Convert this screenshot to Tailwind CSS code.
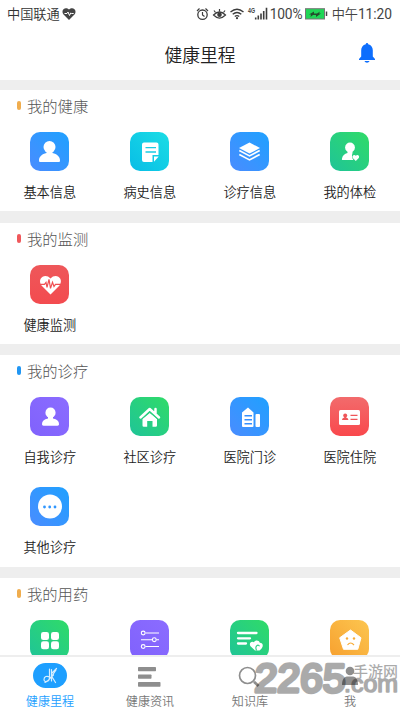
<!DOCTYPE html>
<html lang="zh-CN">
<head>
<meta charset="utf-8">
<title>健康里程</title>
<script src="https://cdn.jsdelivr.net/npm/@tailwindcss/browser@4"></script>
</head>
<body class="bg-white">
<div class="relative flex h-[711px] w-[400px] flex-col overflow-hidden bg-white font-['Noto_Sans_CJK_SC',sans-serif] text-[#222]">

  <!-- status bar -->
  <div class="flex h-7 shrink-0 items-center pl-[7px] text-[13.2px] leading-7 text-[#444]">
    <span class="font-[350] text-[#333]">中国联通</span>
    <svg class="ml-[2px] h-3 w-[14px]" viewBox="0 0 14 12"><path d="M7 12 1.3 6.2C-1.5 2 3.5-2 7 1.6 10.5-2 15.500 2 12.700 6.200Z" fill="#444"/><path d="M2.500 5.500h2.500l1-1.500 1.500 3.500 1.200-2.500 1 .5h2" fill="none" stroke="#fff" stroke-width="1"/></svg>
    <svg class="ml-[120px] h-[14px] w-[74px] shrink-0" viewBox="196 6.500 74 14" fill="none" stroke="#3c3c3c">
      <circle cx="202.500" cy="14.200" r="4.700" stroke-width="1.300"/><path d="M202.500 11.500v3l2 1.500M197 10.500l2.500-2.500M208 10.500l-2.500-2.500" stroke-width="1.200"/>
      <path d="M213.500 14.500q6-6 12 0q-6 6-12 0z" stroke-width="1.200"/><circle cx="219.500" cy="14.300" r="2.300" fill="#3c3c3c" stroke="none"/><path d="M219.500 11V8.500M215.500 12l-1.500-2M223.500 12l1.500-2" stroke-width="1.200"/>
      <path d="M230.500 11.500q6.500-5.500 13 0M232.700 13.800q4.300-3.500 8.600 0M234.800 16q2.200-1.800 4.400 0" stroke-width="1.400"/><circle cx="237" cy="17.700" r="1.100" fill="#3c3c3c" stroke="none"/>
      <path d="M255.700 19v-2M258.300 19v-4M261 19v-6M263.700 19v-8.500M266.500 19V7.300" stroke-width="1.600"/>
      <text x="248" y="12.500" font-size="6.500" font-family="Liberation Sans" font-weight="bold" textLength="7" lengthAdjust="spacingAndGlyphs" fill="#3c3c3c" stroke="none">4G</text>
    </svg>
    <span class="w-[32px] whitespace-nowrap font-['Roboto'] text-[13.800px] tracking-[-0.2px]">100%</span>
    <svg class="ml-[3px] h-3 w-[23px] shrink-0" viewBox="0 0 23 12"><rect x=".5" y=".7" width="19" height="10.300" fill="#1fd656" stroke="#777"/><path d="M21.500 3.500v4.500" stroke="#444" stroke-width="1.500"/><path d="M4 6.500l5-3v2h3l3-2-1 2h2l-5 3.500V7H8L5.500 9 6 6.500z" fill="#234d2c"/></svg>
    <span class="ml-[4px] whitespace-nowrap font-['Roboto','Noto_Sans_CJK_SC',sans-serif] text-[13.800px] tracking-[-0.1px]"><span class="font-[350] text-[13.2px]">中午</span>11:20</span>
  </div>

  <!-- title bar -->
  <header class="flex h-[52px] shrink-0 items-center">
    <h1 class="w-full pl-[45px] pr-[3px] text-center text-[17.8px] font-[350] leading-[50px]">健康里程</h1>
    <svg class="mt-[-2px] mr-[24px] h-5 w-[18px] shrink-0" viewBox="0 0 18 20" fill="#0d6efd"><path d="M9 0c.8 0 1.200.6 1.200 1.300 3 .7 4.600 3 4.600 6v6.200L17 16v.9H1V16l2.200-2.500V7.300c0-3 1.600-5.300 4.600-6C7.800.6 8.200 0 9 0zM6.500 18h5c-.8 2.300-4.200 2.300-5 0z"/></svg>
  </header>

  <svg class="absolute h-0 w-0" aria-hidden="true"><defs>
    <linearGradient id="blue" x1="0" y1="1" x2="1" y2="0"><stop stop-color="#4a8cff"/><stop offset="1" stop-color="#1fa1ff"/></linearGradient>
    <linearGradient id="green" x1="0" y1="1" x2="1" y2="0"><stop stop-color="#1fc498"/><stop offset="1" stop-color="#30db68"/></linearGradient>
    <linearGradient id="cyan" x1="0" y1="1" x2="1" y2="0"><stop stop-color="#08bde6"/><stop offset="1" stop-color="#1bdde5"/></linearGradient>
    <linearGradient id="red" x1="0" y1="1" x2="0" y2="0"><stop stop-color="#f9484c"/><stop offset="1" stop-color="#f26b6c"/></linearGradient>
    <linearGradient id="red2" x1="0" y1="1" x2="0" y2="0"><stop stop-color="#f34b4f"/><stop offset="1" stop-color="#ee575a"/></linearGradient>
    <linearGradient id="purple" x1="0" y1="1" x2="1" y2="0"><stop stop-color="#8062fc"/><stop offset="1" stop-color="#8b6cff"/></linearGradient>
    <linearGradient id="orange" x1="0" y1="1" x2="1" y2="0"><stop stop-color="#f7a02f"/><stop offset="1" stop-color="#fcc650"/></linearGradient>
  </defs></svg>

  <main class="min-h-0 flex-1 overflow-hidden border-t-[10px] border-[#eee]">
    <section class="h-[133px] border-b-[12px] border-[#eee]">
      <h2 class="flex h-[31px] items-center pl-[17px] text-[15.3px] font-light leading-[31px] text-[#555]"><i class="mr-[6px] h-[9px] w-1 rounded-full bg-[#f0ad4e]"></i>我的健康</h2>
      <div class="-ml-px grid w-[400px] grid-cols-4 pt-[11px] text-center text-[13.2px] font-[350] leading-5">
        <div class="flex h-[90px] flex-col items-center gap-[11px]">
          <svg class="h-[39px] w-[39px]" viewBox="0 0 39 39"><rect width="39" height="39" rx="10" fill="url(#blue)"/><g fill="#fff"><circle cx="19.500" cy="15" r="6"/><path d="M16.500 18h6v3c4.500 1 7.500 3.500 7.500 7.500 0 1-.5 1.500-1.500 1.500h-18c-1 0-1.500-.5-1.500-1.500 0-4 3-6.500 7.500-7.500z"/></g></svg>
          <span class="pl-[1.500px]">基本信息</span></div>
        <div class="flex h-[90px] flex-col items-center gap-[11px]">
          <svg class="h-[39px] w-[39px]" viewBox="0 0 39 39"><rect width="39" height="39" rx="10" fill="url(#cyan)"/><path d="M14 10.500h12.500a2 2 0 0 1 2 2V23h-6v7H14a2 2 0 0 1-2-2V12.500a2 2 0 0 1 2-2z" fill="#fff"/><path d="M24 24.500h4.700L24 29.800z" fill="#fff"/><path d="M15.500 15.600h10.500M15.500 20h10.500" stroke="#19cce3" stroke-width="1.300"/></svg>
          <span class="pl-[1.500px]">病史信息</span></div>
        <div class="flex h-[90px] flex-col items-center gap-[11px]">
          <svg class="h-[39px] w-[39px]" viewBox="0 0 39 39"><rect width="39" height="39" rx="10" fill="url(#blue)"/><path d="M19.500 10.500 30 16l-10.500 5.600L9 16z" fill="#fff"/><path d="M9.300 18.500l10.200 5.400 10.200-5.400M9.300 22.500l10.200 5.400 10.200-5.400" fill="none" stroke="#fff" stroke-width="1.700"/></svg>
          <span class="pl-[1.500px]">诊疗信息</span></div>
        <div class="flex h-[90px] flex-col items-center gap-[11px]">
          <svg class="h-[39px] w-[39px]" viewBox="0 0 39 39"><rect width="39" height="39" rx="10" fill="url(#green)"/><g fill="#fff"><circle cx="20" cy="15.500" r="4.900"/><path d="M17.500 18h5v3q-1.500 4 1 7H12.500q-1 0-.5-1.500c.5-3 2.500-4.500 5.500-5.500z"/><path d="M25.800 29l-3-3c-1.300-2.200 1.300-4 3-2.200 1.700-1.800 4.300 0 3 2.200z"/></g></svg>
          <span class="pl-[1.500px]">我的体检</span></div>
      </div>
    </section>

    <section class="h-[132px] border-b-[11px] border-[#eee]">
      <h2 class="flex h-[31px] items-center pl-[17px] text-[15.3px] font-light leading-[31px] text-[#555]"><i class="mr-[6px] h-[9px] w-1 rounded-full bg-[#f0585b]"></i>我的监测</h2>
      <div class="-ml-px grid w-[400px] grid-cols-4 pt-[10.500px] text-center text-[13.2px] font-[350] leading-5">
        <div class="flex h-[90px] flex-col items-center gap-[11px]">
          <svg class="h-[39px] w-[39px]" viewBox="0 0 39 39"><rect width="39" height="39" rx="10" fill="url(#red2)"/><path d="M20.500 29.500 11.500 20.500C6.500 13 15.500 7.500 20.500 13.500c5-6 14-.5 9 7z" fill="#fff"/><path d="M10 19.400h4.500l1.500-2 1 5 2-8 1.500 9 2-6 1.500 4 1.500-2H31" fill="none" stroke="#f05053" stroke-width="1.200"/></svg>
          <span class="pl-[1.500px]">健康监测</span></div>
      </div>
    </section>

    <section class="h-[223px] border-b-[11px] border-[#eee]">
      <h2 class="flex h-[31px] items-center pl-[17px] text-[15.3px] font-light leading-[31px] text-[#555]"><i class="mr-[6px] h-[9px] w-1 rounded-full bg-[#2196f3]"></i>我的诊疗</h2>
      <div class="-ml-px grid w-[400px] grid-cols-4 pt-[11px] text-center text-[13.2px] font-[350] leading-5">
        <div class="flex h-[90px] flex-col items-center gap-[11px]">
          <svg class="h-[39px] w-[39px]" viewBox="0 0 39 39"><rect width="39" height="39" rx="10" fill="url(#purple)"/><g fill="#fff"><circle cx="20.500" cy="15.700" r="5.100"/><path d="M18 19h5v2.500c4 .8 6 2.500 6 5.500 0 1-.5 1.700-1.500 1.700h-14c-1 0-1.500-.7-1.500-1.700 0-3 2-4.700 6-5.500z"/></g></svg>
          <span class="pl-[1.500px]">自我诊疗</span></div>
        <div class="flex h-[90px] flex-col items-center gap-[11px]">
          <svg class="h-[39px] w-[39px]" viewBox="0 0 39 39"><rect width="39" height="39" rx="10" fill="url(#green)"/><path d="M10.500 20.500 19.700 12l9.300 8.500M25.500 17v-5" fill="none" stroke="#fff" stroke-width="2.500" stroke-linecap="round" stroke-linejoin="round"/><path d="M12.500 22l7.300-6L27 22v6.500q0 1.300-1.300 1.300h-3.200V24h-5.300v5.800h-3.400q-1.300 0-1.300-1.300z" fill="#fff"/><path d="M11.500 22.300l8.200-7.300 8.200 7.300" fill="none" stroke="#29cf80" stroke-width=".9"/></svg>
          <span class="pl-[1.500px]">社区诊疗</span></div>
        <div class="flex h-[90px] flex-col items-center gap-[11px]">
          <svg class="h-[39px] w-[39px]" viewBox="0 0 39 39"><rect width="39" height="39" rx="10" fill="url(#blue)"/><path d="M18 10.500l5.500 5V29a1 1 0 0 1-1 1H13a1 1 0 0 1-1-1V15.500z" fill="#fff"/><rect x="25.500" y="17" width="4.500" height="13" rx="1" fill="#fff"/><path d="M14.500 18.700H22M14.500 22.700H22M14.500 26.700H22" stroke="#358fff" stroke-width="1.400"/></svg>
          <span class="pl-[1.500px]">医院门诊</span></div>
        <div class="flex h-[90px] flex-col items-center gap-[11px]">
          <svg class="h-[39px] w-[39px]" viewBox="0 0 39 39"><rect width="39" height="39" rx="10" fill="url(#red)"/><rect x="9" y="13" width="21" height="15" rx="1.500" fill="#fff"/><g fill="#ef5659"><circle cx="15.200" cy="18.500" r="2"/><path d="M14.300 19h1.800v1.500q2 .2 2.400 2.500h-6.600q.4-2.300 2.400-2.500z"/></g><path d="M20.500 18.300h7M20.500 22.300h7" stroke="#ef5659" stroke-width="1.300"/></svg>
          <span class="pl-[1.500px]">医院住院</span></div>
        <div class="flex h-[90px] flex-col items-center gap-[11px]">
          <svg class="h-[39px] w-[39px]" viewBox="0 0 39 39"><rect width="39" height="39" rx="10" fill="url(#blue)"/><circle cx="20" cy="19.500" r="12" fill="#fff"/><g fill="#2f96ff"><circle cx="14.500" cy="20" r="1.400"/><circle cx="19.700" cy="20" r="1.400"/><circle cx="25" cy="20" r="1.400"/></g></svg>
          <span class="pl-[1.500px]">其他诊疗</span></div>
      </div>
    </section>

    <section>
      <h2 class="flex h-[31px] items-center pl-[17px] text-[15.3px] font-light leading-[31px] text-[#555]"><i class="mr-[6px] h-[9px] w-1 rounded-full bg-[#f0ad4e]"></i>我的用药</h2>
      <div class="-ml-px grid w-[400px] grid-cols-4 justify-items-center pt-[11px]">
        <svg class="h-[39px] w-[39px]" viewBox="0 0 39 39"><rect width="39" height="39" rx="10" fill="url(#green)"/><g fill="#fff"><rect x="11" y="12" width="8" height="8" rx="2.300"/><rect x="21" y="12" width="8" height="8" rx="2.300"/><rect x="11" y="21.300" width="8" height="8" rx="2.300"/><rect x="21" y="21.300" width="8" height="8" rx="2.300"/></g></svg>
        <svg class="h-[39px] w-[39px]" viewBox="0 0 39 39"><rect width="39" height="39" rx="10" fill="url(#purple)"/><g fill="none" stroke="#fff" stroke-width="1.100"><path d="M15.500 13H29M11 19.700h11M26.500 19.700H29M15.500 26.500H29"/><circle cx="13.200" cy="13" r="1.900"/><circle cx="24.300" cy="19.700" r="1.900"/><circle cx="13.200" cy="26.500" r="1.900"/></g></svg>
        <svg class="h-[39px] w-[39px]" viewBox="0 0 39 39"><rect width="39" height="39" rx="10" fill="url(#green)"/><path d="M8 13h18.500M8 18.300h12M8 23.500h8" stroke="#fff" stroke-width="2.300" stroke-linecap="round"/><path d="M25 30.500l-4.500-4.200c-2-3 1-5.800 3.500-4 1.200-2.700 5-2.500 5.800.5 3.800 0 4.200 4.500-.3 7.700z" fill="#fff"/><path d="M26.500 30.500c-.8-2-1-4 .5-5 1-.8 2-.2 2.500.7" fill="none" stroke="#29cf82" stroke-width="1.100"/></svg>
        <svg class="h-[39px] w-[39px]" viewBox="0 0 39 39"><rect width="39" height="39" rx="10" fill="url(#orange)"/><path d="M20.500 10 31 17.800 27.800 29.300H13.500L9.700 17.800z" fill="#fff" stroke="#fff" stroke-width="1" stroke-linejoin="round"/><g fill="#f8ac38"><circle cx="17" cy="18.500" r="1.200"/><circle cx="24" cy="18.500" r="1.200"/></g><path d="M17.500 25q3-4 6.500 0" fill="none" stroke="#f8ac38" stroke-width="1.200"/></svg>
      </div>
    </section>
  </main>

  <!-- tab bar -->
  <nav class="grid h-[56px] shrink-0 grid-cols-4 border-t-2 border-[#eee] bg-white text-center text-[12.1px] font-[350] leading-[18px] text-[#777]">
    <div class="flex flex-col items-center pt-[6px] text-[#1e9fff]">
      <svg class="mb-[4px] h-[25px] w-[34px]" viewBox="0 0 34 25"><rect width="34" height="25" rx="12.500" fill="#1e9fff"/><g fill="none" stroke="#d7eeff" stroke-width="1.200" stroke-linecap="round"><path d="M16.500 6v9c0 3.500-5.500 5-5.500 1.500 0-3 3-4 5.500-2.500M18.500 6.500V18M12 19.500c4.500-1.500 7-7 11-12.500M18.500 13l4 6.500M17 15l3.500-3M23.500 5.500l-5 5"/></g></svg>
      <span>健康里程</span></div>
    <div class="flex flex-col items-center pt-[6px]">
      <svg class="mb-[4px] h-[25px] w-[24px]" viewBox="0 0 24 25"><g fill="#8e8e8e"><rect x="0" y="4" width="18" height="4.300" rx=".7"/><rect x="0" y="11.500" width="13.500" height="4.300" rx=".7"/><rect x="0" y="19" width="22.500" height="4.700" rx=".7"/></g></svg>
      <span>健康资讯</span></div>
    <div class="flex flex-col items-center pt-[6px]">
      <svg class="mb-[4px] h-[25px] w-[24px]" viewBox="0 0 24 25"><circle cx="9.500" cy="12.500" r="8" fill="none" stroke="#8e8e8e" stroke-width="1.700"/><path d="M16 18.700l4.500 4.300" stroke="#8e8e8e" stroke-width="2.700"/></svg>
      <span>知识库</span></div>
    <div class="flex flex-col items-center pt-[6px]">
      <svg class="mb-[4px] h-[25px] w-[24px]" viewBox="0 0 24 25"><g fill="#8e8e8e"><circle cx="12" cy="8" r="4.300"/><path d="M4 22c0-5 2-8.500 5-8.500h6c3 0 5 3.500 5 8.500z"/></g></svg>
      <span>我</span></div>
  </nav>

  <!-- site watermark -->
  <svg class="pointer-events-none absolute top-[645px] left-[240px] h-[66px] w-[160px] opacity-33" viewBox="240 645 160 66" fill="#000" stroke="#000" stroke-linejoin="round">
    <text transform="translate(254 691.500) skewX(-3)" font-family="Liberation Sans" font-size="40" stroke-width="3.600" textLength="91" lengthAdjust="spacingAndGlyphs">2265</text>
    <text x="353" y="677" font-family="Noto Sans CJK SC" font-weight="500" font-size="14.600" stroke="none" textLength="45" lengthAdjust="spacingAndGlyphs">手游网</text>
    <text x="344" y="692" font-family="Liberation Sans" font-size="23" stroke-width="1.500" textLength="54" lengthAdjust="spacingAndGlyphs">.com</text>
  </svg>
</div>
</body>
</html>
